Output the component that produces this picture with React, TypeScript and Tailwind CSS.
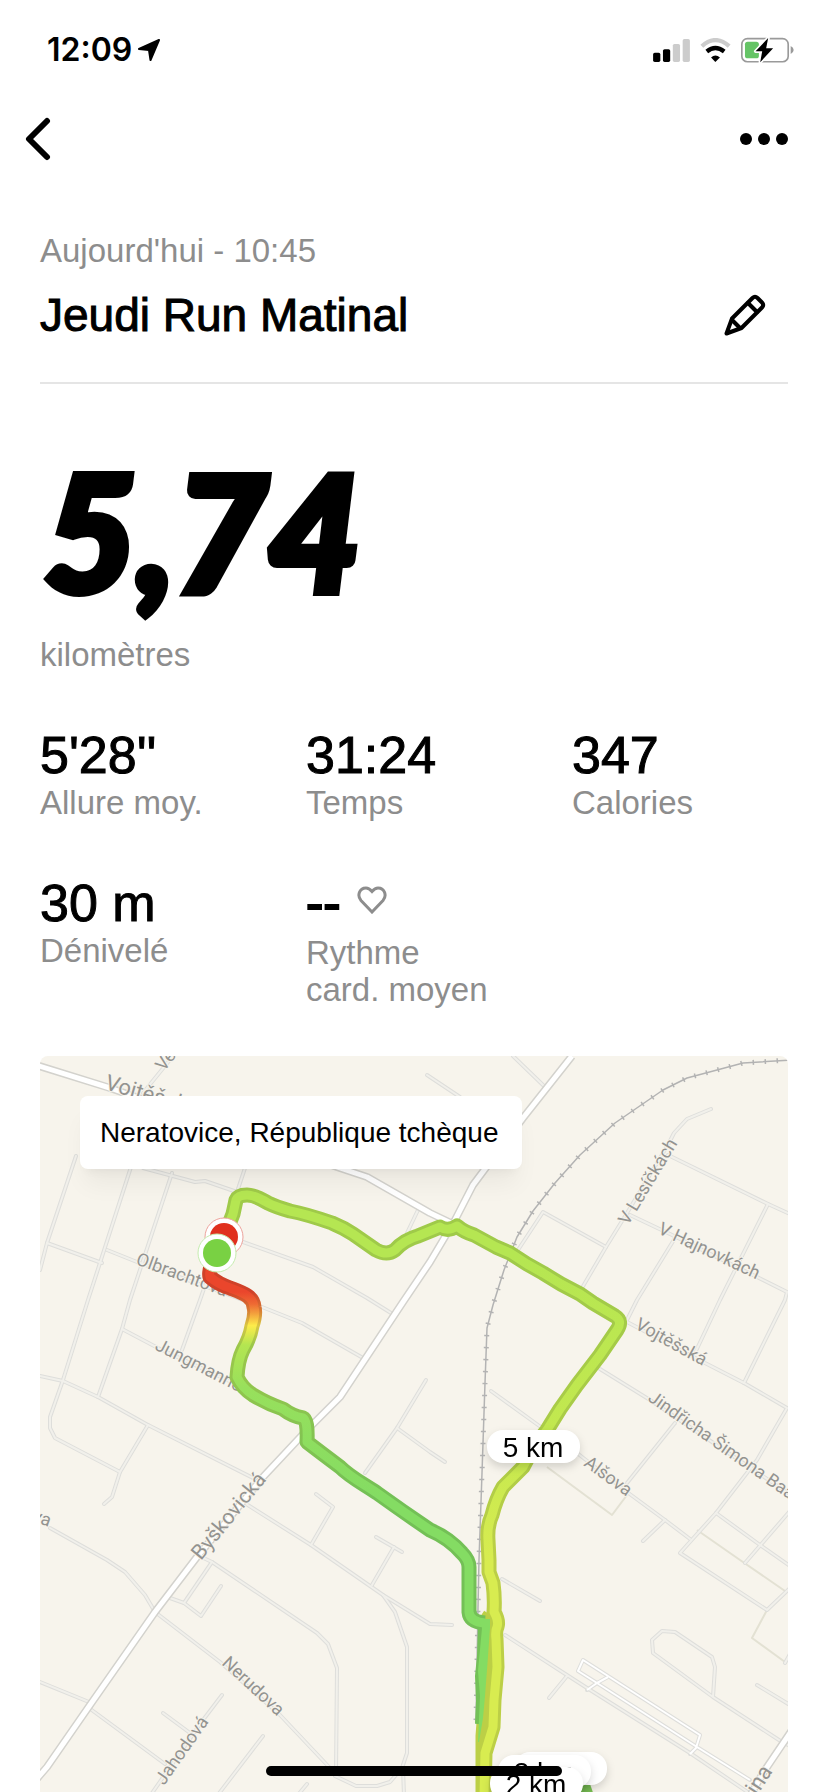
const stats = [
  { value: "5'28''", label: "Allure moy." },
  { value: "31:24", label: "Temps" },
  { value: "347", label: "Calories" },
  { value: "30 m", label: "Dénivelé" },
];

const mainRoads = [
  "M532 0 L483 62 L433 129 L415 164 L390 206 L363 246 L300 341 L267 374 L223 421 L157 501 L115 556 L50 649 L7 711 L-6 726",
  "M-4 9 L70 32 L300 112 L327 121 L390 157 L413 168",
  "M752 674 L723 717 L710 740",
];

const streets = [
  "M133 0 L103 37",
  "M36 100 L7 187 L0 214",
  "M7 187 L62 207",
  "M92 108 L90 114 L48 244 L23 324 L10 361 V372 L15 382 L80 416",
  "M132 117 L90 244 L82 273 L58 341",
  "M103 112 L155 126 L165 125 L197 136 L205 112",
  "M67 194 L97 206 L187 238 L222 251 L262 267 L323 302",
  "M203 186 L273 211 L327 242 L351 257",
  "M378 154 L367 177",
  "M168 221 L160 244 L142 294",
  "M82 273 L118 292 L200 330",
  "M0 320 L23 325 L58 341 L108 369 L217 424",
  "M108 369 L80 416 L72 441 L64 448",
  "M386 324 L357 372 L325 417",
  "M357 372 L390 396 L405 406",
  "M276 438 L293 451 L271 489",
  "M203 446 L271 489 L343 539 L390 568 L412 569",
  "M336 481 L362 496",
  "M354 491 L332 529",
  "M10 472 L67 504 L85 516 L105 539 L115 556 L180 606 L240 659 L290 712",
  "M157 499 L172 506 L277 577 L288 588 L297 612 L296 718",
  "M172 506 L144 547",
  "M130 542 L144 547 L161 560 L181 530",
  "M343 539 L355 556 L367 591 V697 L362 712 L350 726 L337 730 H316 L295 720",
  "M363 712 L364 740",
  "M0 626 L49 646",
  "M49 652 L125 708",
  "M182 639 L163 664 L110 740",
  "M123 657 L150 677",
  "M223 680 L177 740",
  "M267 728 L257 740",
  "M473 0 L504 30",
  "M387 19 L420 41",
  "M671 53 L647 63 L634 77 L629 87 L587 157 L566 191 L542 232",
  "M628 99 L728 148 L750 158",
  "M478 194 L503 156 L566 191",
  "M590 159 L630 178 L717 221 L747 236 L745 244 L704 327",
  "M635 182 L597 244 L587 264",
  "M728 148 L680 244 L655 297",
  "M587 266 L663 306 L704 327 L747 352 L717 404 L676 457 L640 497 L727 554 L750 532",
  "M560 313 L610 344 L672 386 L748 437",
  "M635 367 L587 427",
  "M451 335 L498 369 L537 397 L587 436 L625 464 L650 483",
  "M625 464 L603 485",
  "M676 457 L720 489 L750 510",
  "M750 455 L705 507",
  "M462 523 L500 545",
  "M465 579 L547 632 L650 697 L712 739",
  "M527 620 L509 642",
  "M750 690 L742 686 L673 641 L675 611 L672 601 L635 576 L622 575 L612 584 L613 597 L673 641",
  "M717 629 L750 649",
  "M750 598 L745 607",
];

const lanes = [
  "M650 698 L656 692 L660 679 L543 604 L538 615 L557 627 L657 691 L710 724",
  "M568 621 L557 627 L547 634",
];

const boundaries = [
  "M507 411 L572 459 L587 439",
  "M657 474 L700 504 L745 535",
  "M727 554 L712 582 L745 606",
];

const railway =
  "M750 4 L703 7 L677 14 L647 22 L623 34 L575 67 L540 99 L515 127 L493 155 L477 181 L464 214 L453 249 L447 272 L445 327 L442 417 L439 504 L438 551 L436 667";

const outbound =
  "M176 200 Q168 214 170 221 Q178 228 190 232 C203 237 213 240 214 251 Q216 258 212 270 Q210 282 203 294 Q198 304 197 321 Q202 332 213 339 Q228 348 243 353 Q252 360 263 362 Q268 364 267 386 Q280 396 300 411 C310 421 322 427 337 437 Q362 455 390 474 Q409 482 422 497 Q429 504 429 511 V556 Q430 566 445 567";

const inbound =
  "M186 176 L193 158 Q195 149 196 144 Q198 139 207 139 Q215 139 228 147 Q236 151 250 155 Q266 158 292 167 Q304 172 313 178 L336 194 Q347 200 355 194 Q364 184 378 180 L400 171 Q408 176 417 170 Q424 176 434 179 L456 191 L470 197 L487 208 L503 217 L521 228 L540 238 L553 247 L575 260 Q583 265 577 274 L560 299 L537 329 L520 353 L507 374 L493 392 L483 411 L463 431 Q456 443 452 459 Q447 470 448 484 L449 504 V516 L453 527 Q455 542 454 556 Q459 565 457 571 Q455 575 456 583 L457 611 L454 644 L453 671 L445 697 L444 740";

const streetNames = [
  { name: "Vojtěšská", x: 64, y: 33, angle: 16, size: 22 },
  { name: "Ve", x: 124, y: 16, angle: -52, size: 18 },
  { name: "Olbrachtova", x: 95, y: 208, angle: 20, size: 18 },
  { name: "V Lesíčkách", x: 588, y: 170, angle: -59, size: 18 },
  { name: "V Hajnovkách", x: 617, y: 177, angle: 25, size: 18 },
  { name: "Jungmannova", x: 114, y: 293, angle: 27, size: 18 },
  { name: "Byškovická", x: 161, y: 505, angle: -51, size: 21 },
  { name: "Vojtěšská", x: 594, y: 272, angle: 29, size: 18 },
  { name: "Jindřicha Šimona Baara", x: 607, y: 344, angle: 35, size: 18 },
  { name: "Alšova", x: 543, y: 409, angle: 36, size: 18 },
  { name: "Nerudova", x: 181, y: 608, angle: 43, size: 18 },
  { name: "Jahodová", x: 124, y: 730, angle: -55, size: 18 },
  { name: "ova", x: -18, y: 461, angle: 20, size: 18 },
  { name: "ina", x: 717, y: 740, angle: -57, size: 22 },
];

const StatusBar = () => (
  <div className="flex h-10 items-center justify-between pl-[47px] pr-[34px]">
    <div className="flex items-center gap-1.5">
      <span className="font-['Inter',sans-serif] text-[32px] font-semibold leading-10">12:09</span>
      <svg viewBox="0 0 22 22" className="h-[22px] w-[22px]">
        <path d="M21 1 L12.500 21 L11 11 L1 10 Z" stroke="#000" strokeWidth="2" strokeLinejoin="round" />
      </svg>
    </div>
    <div className="flex items-center gap-2.5">
      <svg viewBox="0 0 112 70" className="h-[23px] w-[37px]">
        <rect x="0" y="42" width="22" height="28" rx="5" />
        <rect x="30" y="31" width="22" height="39" rx="5" />
        <rect x="60" y="15" width="22" height="55" rx="5" fill="#cccccc" />
        <rect x="90" y="0" width="22" height="70" rx="5" fill="#cccccc" />
      </svg>
      <svg viewBox="0 0 93 73" className="h-6 w-[31px]" fill="none">
        <path d="M5 25 Q46 -12 88 25" stroke="#cccccc" strokeWidth="13" />
        <path d="M20 41 Q46 20 73 41" stroke="#000" strokeWidth="13" />
        <path d="M33 59 Q46 48 60 59 L46 73 Z" fill="#000" />
      </svg>
      <svg viewBox="0 0 160 78" className="h-[26px] w-[53px]">
        <rect x="2.500" y="4.500" width="140" height="70" rx="17" fill="none" stroke="#9a9a9a" strokeWidth="5" />
        <path d="M150 27 Q159 31 159 39 Q159 47 150 51 Z" fill="#9a9a9a" />
        <rect x="12" y="14" width="42" height="50" rx="8" fill="#65c466" />
        <path
          d="M82 3 L44 43 H64 L58 76 L97 34 H76 Z"
          stroke="#fff"
          strokeWidth="10"
          strokeLinejoin="round"
          paintOrder="stroke"
        />
      </svg>
    </div>
  </div>
);

const Pill = ({ x, y, text }: { x: number; y: number; text: string }) => (
  <g className="drop-shadow-lg">
    <rect x={x} y={y} width="93" height="33" rx="16" fill="#fff" />
    <text x={x + 46} y={y + 27} textAnchor="middle" fontSize="28" fill="#000">{text}</text>
  </g>
);

const RunMap = () => (
  <svg viewBox="0 0 748 736" className="block h-auto w-full" fill="none" strokeLinejoin="round" role="img" aria-label="Parcours">
    <defs>
      <linearGradient id="out" gradientUnits="userSpaceOnUse" x1="0" y1="200" x2="0" y2="440">
        <stop offset="0.150" stopColor="#ea462c" />
        <stop offset="0.200" stopColor="#ee6a33" />
        <stop offset="0.240" stopColor="#f3a13d" />
        <stop offset="0.290" stopColor="#fdec4a" />
        <stop offset="0.370" stopColor="#b4e551" />
        <stop offset="0.550" stopColor="#98e05c" />
        <stop offset="1" stopColor="#84dc63" />
      </linearGradient>
      <linearGradient id="outEdge" gradientUnits="userSpaceOnUse" x1="0" y1="200" x2="0" y2="440">
        <stop offset="0.150" stopColor="#cf4129" />
        <stop offset="0.220" stopColor="#d87532" />
        <stop offset="0.290" stopColor="#dac743" />
        <stop offset="0.370" stopColor="#9cc74a" />
        <stop offset="1" stopColor="#73c056" />
      </linearGradient>
      <linearGradient id="in" gradientUnits="userSpaceOnUse" x1="0" y1="200" x2="0" y2="560">
        <stop offset="0" stopColor="#b5e652" />
        <stop offset="0.500" stopColor="#c3e84f" />
        <stop offset="0.850" stopColor="#d8ec50" />
      </linearGradient>
      <linearGradient id="inEdge" gradientUnits="userSpaceOnUse" x1="0" y1="200" x2="0" y2="560">
        <stop offset="0" stopColor="#9fca49" />
        <stop offset="0.500" stopColor="#abcc47" />
        <stop offset="0.850" stopColor="#bccf46" />
      </linearGradient>
    </defs>

    <g stroke="#e3e1d3" strokeWidth="2">
      {boundaries.map((d) => <path key={d} d={d} />)}
    </g>
    <g stroke="#dededb" strokeWidth="4" strokeLinecap="round">
      {streets.map((d) => <path key={d} d={d} />)}
      {lanes.map((d) => <path key={d} d={d} />)}
    </g>
    <g stroke="#f1f0eb" strokeWidth="2" strokeLinecap="round">
      {streets.map((d) => <path key={d} d={d} />)}
    </g>
    <g stroke="#fff" strokeWidth="2">
      {lanes.map((d) => <path key={d} d={d} />)}
    </g>
    <g stroke="#d3d2cd" strokeWidth="8">
      {mainRoads.map((d) => <path key={d} d={d} />)}
    </g>
    <g stroke="#fff" strokeWidth="5">
      {mainRoads.map((d) => <path key={d} d={d} />)}
    </g>
    <path d={railway} stroke="#b3b3b3" strokeWidth="1.500" />
    <path d={railway} stroke="#b3b3b3" strokeWidth="5" strokeDasharray="1.500 10.500" />

    <g className="font-['Roboto',sans-serif]" fill="#939390" stroke="#f7f4ec" strokeWidth="2" paintOrder="stroke">
      {streetNames.map((s) => (
        <text key={s.name + s.x} fontSize={s.size} transform={`translate(${s.x} ${s.y}) rotate(${s.angle})`}>{s.name}</text>
      ))}
    </g>

    {/* kilometre 2 to 4 loop, mostly below the fold */}
    <path d="M530 745 L535 728 H550 L556 745 Z" fill="#79c154" />
    <path d="M440 561 L449 567 V600 L446 640 L443 680 V740" stroke="#bccf46" strokeWidth="15" />
    <path d={inbound} stroke="url(#inEdge)" strokeWidth="15" />
    <path d={inbound} stroke="url(#in)" strokeWidth="9" />
    <path d={outbound} stroke="url(#outEdge)" strokeWidth="15" />
    <path d="M441 567 L440 600 L438 620 L439 645 L438 668" stroke="#73c056" strokeWidth="6" />
    <path d={outbound} stroke="url(#out)" strokeWidth="9" />
    <path d="M439 563 H450 V572 L448 600 L445 640 L443 662 L439 686 L438 686 L440 640 L438 615 L442 572 Z" fill="#84dc63" />

    <circle cx="184" cy="181" r="19" fill="#fff" stroke="#eda39c" />
    <circle cx="184" cy="181" r="14" fill="#e0301e" />
    <circle cx="177" cy="197" r="19" fill="#fff" stroke="#c4ecae" />
    <circle cx="177" cy="197" r="14" fill="#79d143" />

    <Pill x={447} y={374} text="5 km" />
    <Pill x={474} y={696} text="4 km" />
    <Pill x={458} y={699} text="3 km" />
    <Pill x={450} y={711} text="2 km" />
  </svg>
);

const App = () => {
  return (
    <div className="h-screen w-full overflow-hidden bg-white pt-[30px] font-['Liberation_Sans',Arial,sans-serif] text-black">
      <StatusBar />

      <nav className="mt-8 flex h-[74px] items-center justify-between pl-6 pr-10">
        <button aria-label="Retour">
          <svg viewBox="0 0 28 44" className="h-11 w-7" fill="none" stroke="#000" strokeWidth="6" strokeLinecap="round" strokeLinejoin="round">
            <path d="M23 4 L5 22 L23 40" />
          </svg>
        </button>
        <button aria-label="Plus d'options">
          <svg viewBox="0 0 48 12" className="h-3 w-12">
            <circle cx="6" cy="6" r="6" />
            <circle cx="24" cy="6" r="6" />
            <circle cx="42" cy="6" r="6" />
          </svg>
        </button>
      </nav>

      <main className="px-10">
        <header className="mt-[55px] border-b-2 border-[#e5e5e5] pb-[39px]">
          <p className="text-[33px] leading-10 text-[#8d8d8d]">Aujourd'hui - 10:45</p>
          <div className="mt-4 flex items-center justify-between pr-[22px]">
            <h1 className="text-[46px] leading-[56px] [-webkit-text-stroke:1px_black]">Jeudi Run Matinal</h1>
            <button aria-label="Modifier le titre">
              <svg viewBox="0 0 42 42" className="h-[42px] w-[42px]" fill="none" stroke="#000" strokeWidth="4" strokeLinejoin="round" strokeLinecap="round">
                <path d="M2.500 39.500 L8 24.500 L28.500 4 Q31 1.500 33.500 4 L38 8.500 Q40.500 11 38 13.500 L17.500 34 Z" />
                <path d="M24 9 L33 18" />
                <path d="M8 26 L16 34" />
              </svg>
            </button>
          </div>
        </header>

        <p className="mt-[62px] pl-1 font-['Lato',sans-serif] text-[160px] font-black italic leading-[168px] [-webkit-text-stroke:8px_black]">5,74</p>
        <p className="mt-[21px] text-[33px] leading-10 text-[#8d8d8d]">kilomètres</p>

        <div className="mt-[51px] grid grid-cols-3 gap-x-[50px] gap-y-[53px]">
          {stats.map((stat) => (
            <div key={stat.label}>
              <p className="text-[52px] leading-[58px] [-webkit-text-stroke:1px_black]">{stat.value}</p>
              <p className="text-[33px] leading-[37px] text-[#8d8d8d]">{stat.label}</p>
            </div>
          ))}
          <div>
            <div className="flex items-start gap-4">
              <p className="text-[52px] leading-[58px] [-webkit-text-stroke:2px_black]">--</p>
              <svg viewBox="0 0 30 28" className="mt-3 h-7 w-[30px]" fill="none" stroke="#8d8d8d" strokeWidth="3">
                <path d="M15 26 L4 14.500 C0 10 2 2 9 2 Q12 2 15 5.500 Q18 2 21 2 C28 2 30 10 26 14.500 Z" />
              </svg>
            </div>
            <p className="mt-0.5 text-[33px] leading-[37px] text-[#8d8d8d]">
              Rythme
              <br />
              card. moyen
            </p>
          </div>
        </div>

        <section className="relative mt-12 overflow-hidden rounded-t-lg bg-[#f7f4ec]">
          <RunMap />
          <div className="absolute left-10 top-10 rounded-lg bg-white py-4 pl-5 pr-6 text-[28px] leading-[41px] shadow-xl shadow-black/5">
            Neratovice, République tchèque
          </div>
        </section>
      </main>

      <div className="fixed bottom-4 left-1/2 h-2.5 w-[296px] -translate-x-1/2 rounded-full bg-black" />
    </div>
  );
};

export default App;
